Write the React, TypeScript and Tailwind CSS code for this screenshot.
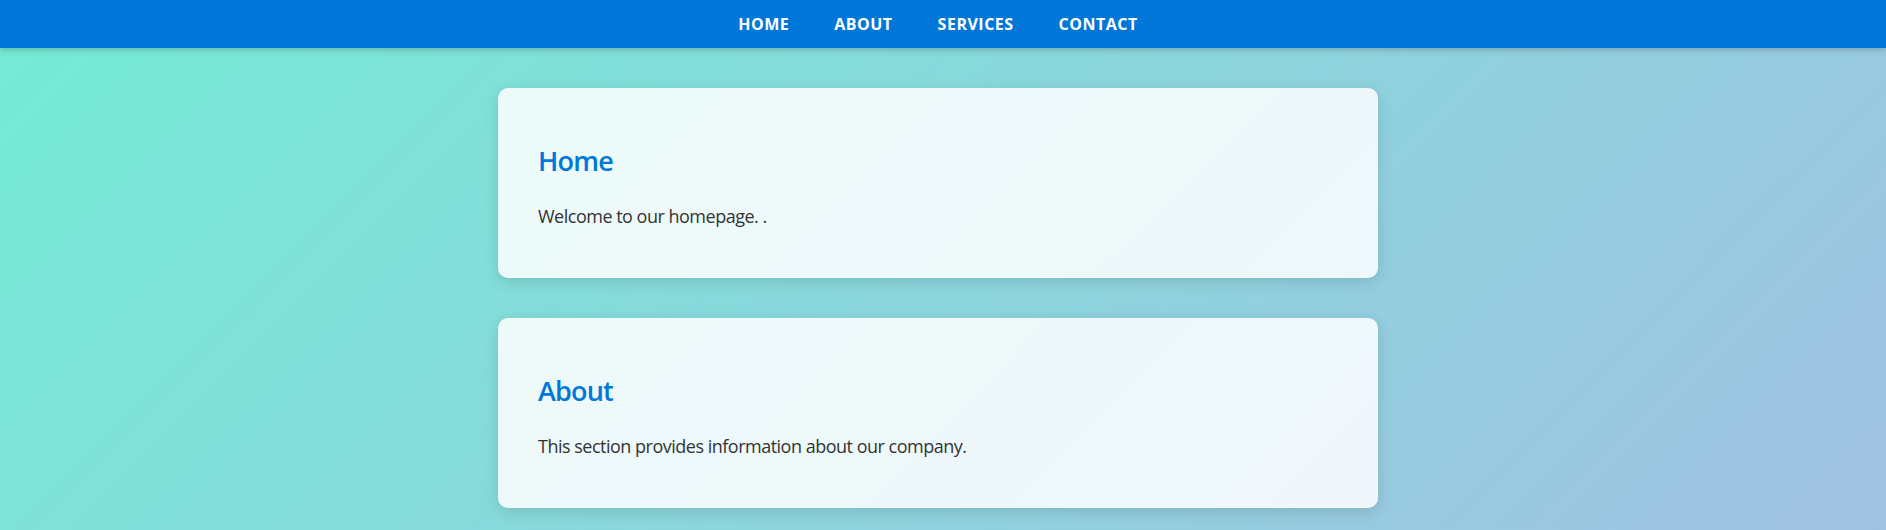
import React from 'react';

const links = ['Home', 'About', 'Services', 'Contact'];

const sections = [
  { title: 'Home', text: 'Welcome to our homepage. .' },
  { title: 'About', text: 'This section provides information about our company.' },
];

const App: React.FC = () => {
  return (
    <div className="min-h-screen bg-[linear-gradient(135deg,#74ebd5,#a1c1e3)] font-['Open_Sans',sans-serif]">
      {/* Top navigation */}
      <nav className="h-12 bg-[#0077d9] shadow-[0_2px_6px_rgba(0,0,0,0.2)] pr-[10px] flex items-center justify-center">
        <ul className="flex gap-[45px]">
          {links.map((l) => (
            <li key={l}>
              <a href={'#' + l.toLowerCase()} className="text-white text-[16px] font-bold uppercase tracking-[0.5px] leading-[48px]">
                {l}
              </a>
            </li>
          ))}
        </ul>
      </nav>

      {/* Content */}
      <main className="pr-[10px] pt-10 flex flex-col items-center gap-10">
        {sections.map((s) => (
          <section
            key={s.title}
            id={s.title.toLowerCase()}
            className="w-[880px] rounded-[10px] bg-white/[0.85] shadow-[0_4px_15px_rgba(0,0,0,0.12)] px-10 pt-[55px] pb-[49px]"
          >
            <h2 className="text-[27px] leading-[36px] font-semibold tracking-[-0.8px] text-[#0077d9]">{s.title}</h2>
            <p className="mt-6 text-[18px] leading-[26px] tracking-[-0.5px] text-[#333]">{s.text}</p>
          </section>
        ))}
      </main>
    </div>
  );
};

export default App;
